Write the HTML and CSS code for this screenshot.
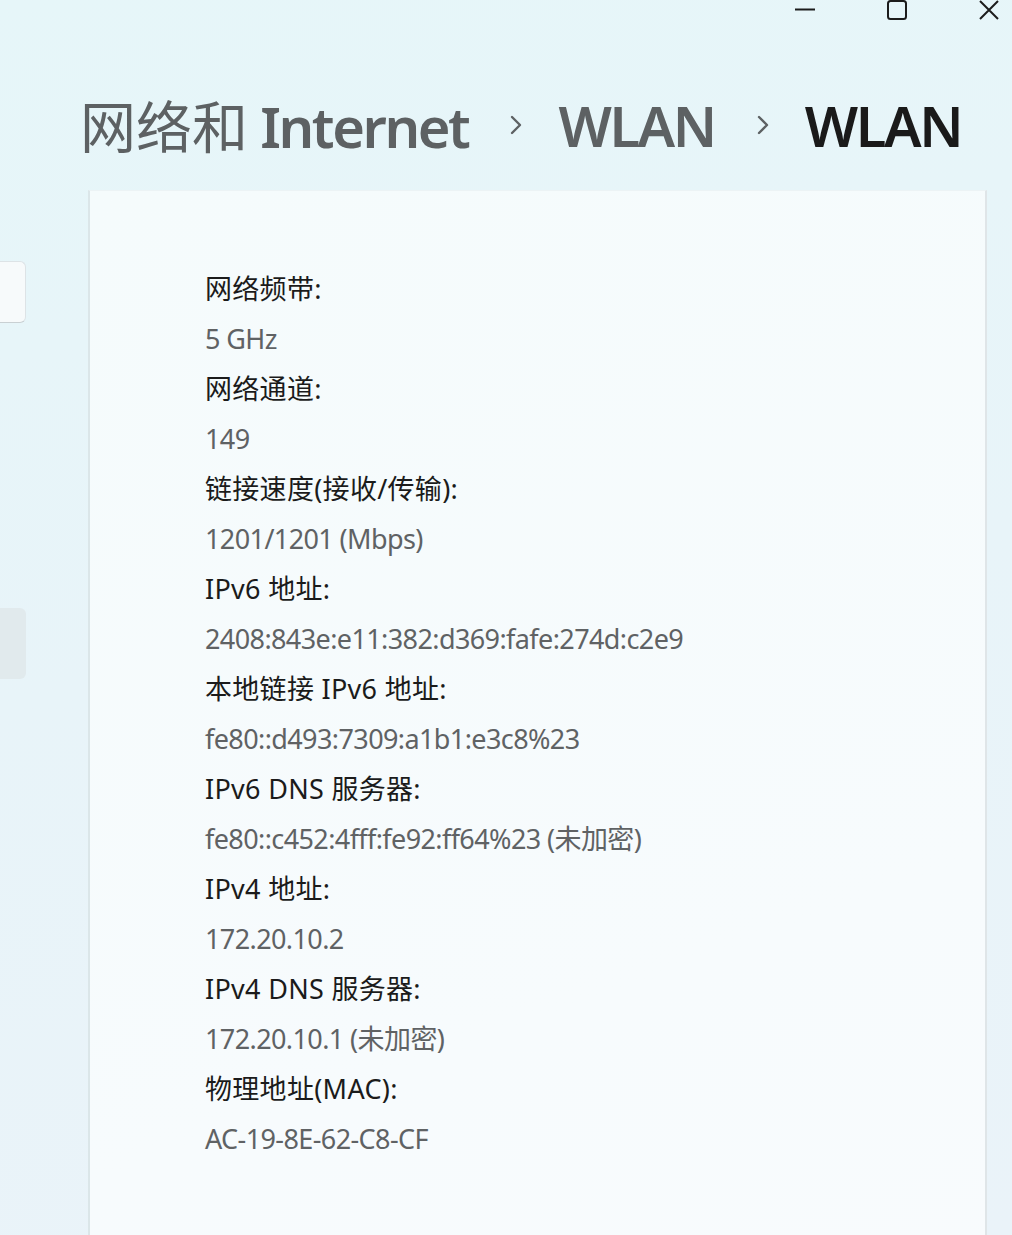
FILE: index.html
```html
<!DOCTYPE html>
<html lang="zh-CN">
<head>
<meta charset="utf-8">
<title>WLAN</title>
<link rel="stylesheet" href="styles.css">
</head>
<body>
<div class="window">
  <div class="titlebar">
    <span class="ctl ctl-min"><svg width="22" height="20" viewBox="0 0 22 20"><path d="M1 9.5H21" stroke="#1c1c1c" stroke-width="2"/></svg></span>
    <span class="ctl ctl-max"><svg width="22" height="22" viewBox="0 0 22 22"><rect x="2" y="1" width="18" height="18" rx="2.5" fill="none" stroke="#1c1c1c" stroke-width="2"/></svg></span>
    <span class="ctl ctl-close"><svg width="22" height="22" viewBox="0 0 22 22"><path d="M2 1L20 19M20 1L2 19" stroke="#1c1c1c" stroke-width="2"/></svg></span>
  </div>
  <h1 class="crumbs">
    <span class="crumb"><span class="cjk">网络和</span> Internet</span>
    <span class="sep"><svg width="16" height="24" viewBox="0 0 16 24"><path d="M4 4L12 12L4 20" fill="none" stroke="#5d6163" stroke-width="2.4" stroke-linecap="round" stroke-linejoin="round"/></svg></span>
    <span class="crumb">WLAN</span>
    <span class="sep"><svg width="16" height="24" viewBox="0 0 16 24"><path d="M4 4L12 12L4 20" fill="none" stroke="#5d6163" stroke-width="2.4" stroke-linecap="round" stroke-linejoin="round"/></svg></span>
    <span class="crumb current">WLAN</span>
  </h1>
  <div class="main">
    <div class="sidebar">
      <div class="nav-item nav-active"></div>
      <div class="nav-item nav-hover"></div>
    </div>
    <div class="card">
      <dl class="props">
        <dt>网络频带:</dt><dd>5 GHz</dd>
        <dt>网络通道:</dt><dd>149</dd>
        <dt>链接速度(接收/传输):</dt><dd>1201/1201 (Mbps)</dd>
        <dt>IPv6 地址:</dt><dd>2408:843e:e11:382:d369:fafe:274d:c2e9</dd>
        <dt>本地链接 IPv6 地址:</dt><dd>fe80::d493:7309:a1b1:e3c8%23</dd>
        <dt>IPv6 DNS 服务器:</dt><dd>fe80::c452:4fff:fe92:ff64%23 (未加密)</dd>
        <dt>IPv4 地址:</dt><dd>172.20.10.2</dd>
        <dt>IPv4 DNS 服务器:</dt><dd>172.20.10.1 (未加密)</dd>
        <dt>物理地址(MAC):</dt><dd>AC-19-8E-62-C8-CF</dd>
      </dl>
    </div>
  </div>
</div>
</body>
</html>
```
FILE: styles.css
```css
html, body {
  margin: 0;
  padding: 0;
  height: 100%;
  overflow: hidden;
}
body {
  background: linear-gradient(170deg, #e6f6f9 0%, #e8f4f9 50%, #eaf3f9 100%);
  font-family: "Noto Sans", "Noto Sans CJK SC", sans-serif;
  color: #1b1b1b;
}
.window {
  width: 1012px;
  height: 1235px;
  display: flex;
  flex-direction: column;
}
.titlebar {
  height: 24px;
  display: flex;
  justify-content: flex-end;
  align-items: flex-start;
  padding-right: 12px;
}
.ctl {
  display: flex;
  width: 22px;
  margin-left: 70px;
}
.crumbs {
  margin: 51px 0 15px 80px;
  height: 100px;
  display: flex;
  align-items: center;
  font-size: 56px;
  font-weight: 600;
  line-height: 1;
  color: #5d6163;
  white-space: nowrap;
}
.crumb {
  letter-spacing: -2.4px;
}
.crumbs .cjk {
  font-family: "Noto Sans CJK SC", sans-serif;
  font-weight: 400;
  letter-spacing: 0;
}
.crumb.current {
  color: #1a1a1a;
}
.sep {
  display: flex;
  margin: 0 34px 0 40px;
}
.main {
  flex: 1;
  display: flex;
  min-height: 0;
}
.sidebar {
  width: 88px;
  flex: none;
  display: flex;
  flex-direction: column;
}
.nav-item {
  margin-left: -12px;
  width: 38px;
  height: 62px;
  border-radius: 6px;
  box-sizing: border-box;
}
.nav-active {
  margin-top: 71px;
  background: #f7fafb;
  border: 1px solid #dde3e6;
  border-bottom-color: #c9d0d3;
}
.nav-hover {
  margin-top: 285px;
  height: 71px;
  background: #e1eaed;
}
.card {
  width: 899px;
  box-sizing: border-box;
  height: 1100px;
  background: linear-gradient(160deg, #f5fbfc 0%, #f7fbfd 70%, #f8fbfd 100%);
  border-left: 2px solid #dbe6e9;
  border-right: 2px solid #dfe5e8;
  border-top: 1px solid #ecf3f5;
  padding: 73px 0 0 115px;
}
.props {
  margin: 0;
  font-size: 27px;
  line-height: 50px;
}
.props dt {
  margin: 0;
  color: #1b1b1b;
  letter-spacing: 0.3px;
}
.props dd {
  margin: 0;
  color: #5f6264;
  letter-spacing: -0.6px;
}
```
